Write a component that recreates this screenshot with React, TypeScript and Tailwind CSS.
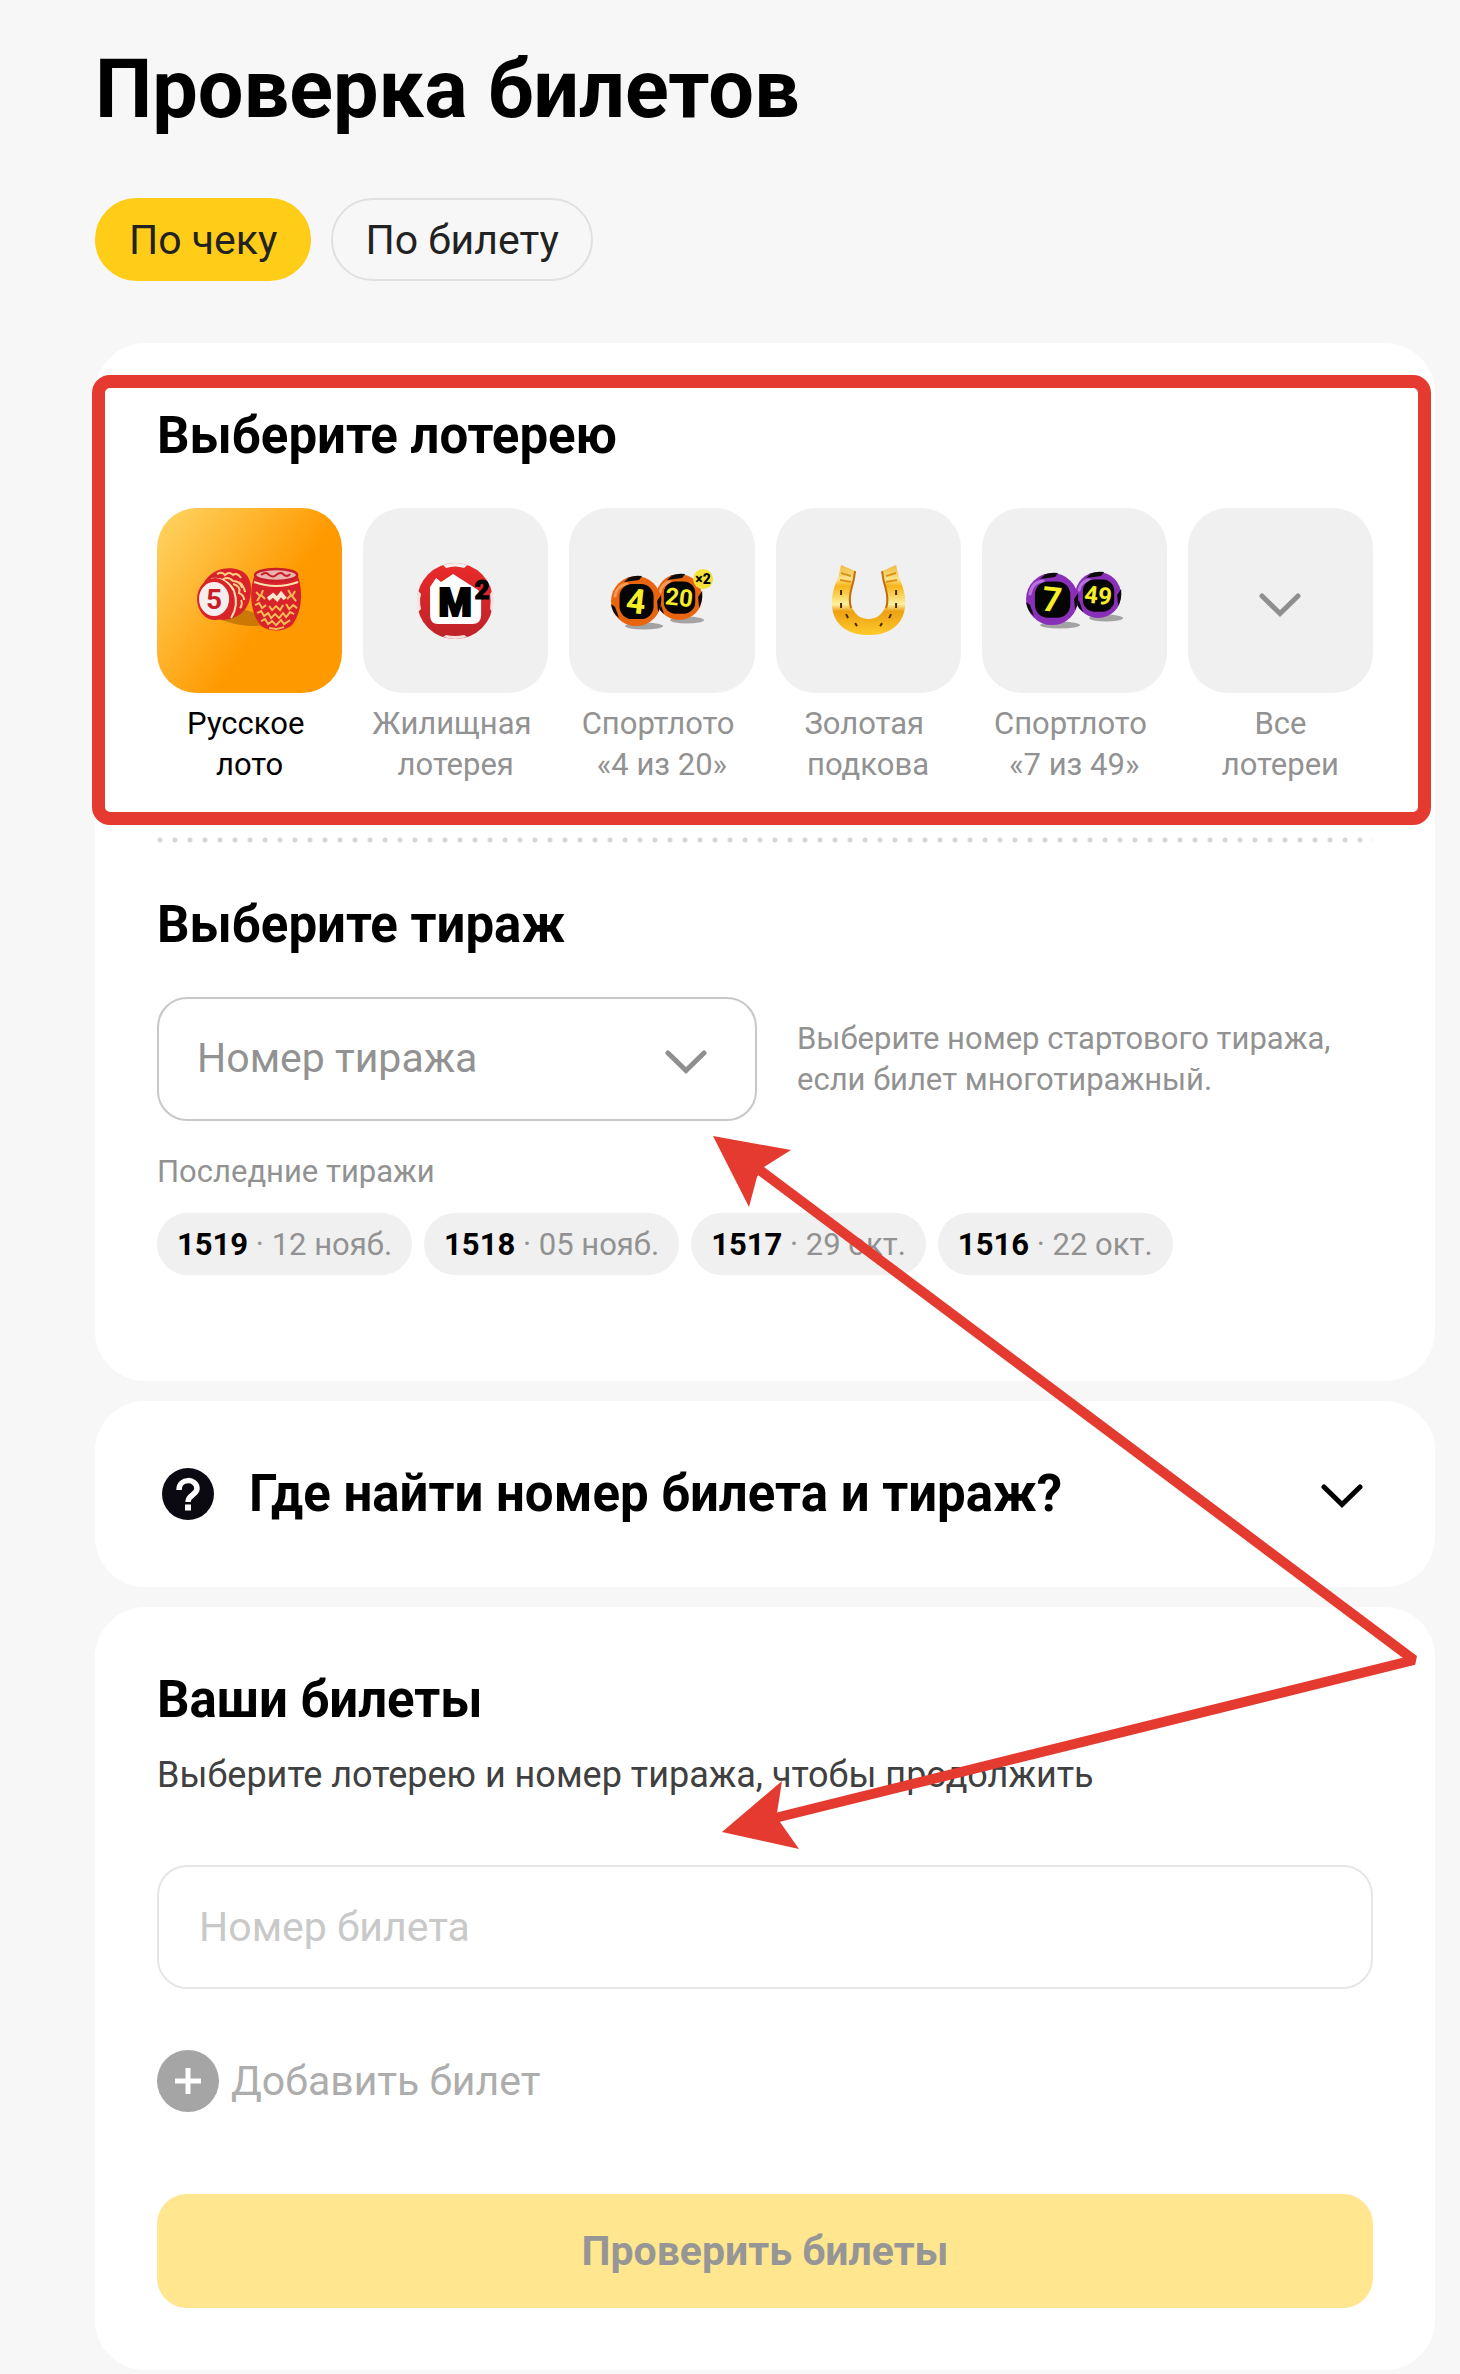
import { useState, type ReactNode } from 'react';

const Chevron = ({ className = '' }: { className?: string }) => (
  <svg viewBox="0 0 42 24" className={`w-[42px] h-6 ${className}`} fill="none" aria-hidden="true">
    <path d="M3 3 L21 20.5 L39 3" stroke="currentColor" strokeWidth="5" strokeLinecap="round" />
  </svg>
);

// Wooden barrels with red ornament
const RussianLotoIcon = () => (
  <svg viewBox="0 0 185 185" className="w-full h-full" aria-hidden="true">
    <ellipse cx="80" cy="108" rx="30" ry="8" fill="#a85f00" opacity="0.6" transform="rotate(12 80 108)" />
    <path d="M46 76 C54 60 72 58 82 62 C92 65 96 76 93 90 C90 104 80 111 66 112 L48 108 Z" fill="#d9232b" />
    <path
      d="M60 66 q5 -3 8 1 q4 -4 8 0 q4 -3 8 3 M66 71 q6 -3 10 2 q7 0 9 7 M76 76 q8 2 6 9 q5 2 5 7 M82 74 q5 4 6 10 M84 92 q2 4 -1 8"
      stroke="#ffcf86"
      strokeWidth="2"
      fill="none"
    />
    <path d="M54 71 q16 -2 23 12 q5 14 -3 27" stroke="#ffe2b0" strokeWidth="2" fill="none" />
    <ellipse cx="58" cy="91" rx="18" ry="21" fill="#d9232b" />
    <ellipse cx="57" cy="91" rx="15" ry="17" fill="#f4eeee" />
    <text x="57" y="101" textAnchor="middle" fontSize="28" fontWeight="700" fill="#c81e2a">5</text>
    <path d="M98 66 C92 80 92 104 104 118 Q119 127 134 118 C146 104 146 80 140 66 Z" fill="#d9232b" />
    <ellipse cx="119" cy="67" rx="21" ry="6" fill="#eab3ae" stroke="#c81e2a" strokeWidth="2.5" />
    <path d="M104 67 q5 -4 8 0 q4 3 7 0 q5 -4 8 0 q4 2 6 -1" stroke="#c81e2a" strokeWidth="2" fill="none" />
    <path d="M97 74 Q119 82 141 74" stroke="#ffe2b0" strokeWidth="2" fill="none" />
    <path
      d="M99 84 l4 4 -3 5 M106 82 l-2 5 4 4 M131 82 l3 5 -4 4 M138 83 l-3 5 4 5 M98 97 l4 -2 3 5 4 -3 M112 98 l3 4 4 -4 4 4 3 -5 M129 96 l3 5 4 -4 4 3 M100 105 l4 -2 3 5 4 -3 3 5 4 -4 4 4 4 -5 3 4 4 -5 4 2 M104 113 l4 -2 3 5 4 -3 4 4 5 -5 3 4 6 -4 M112 120 l7 1 8 -2"
      stroke="#f6bc55"
      strokeWidth="2"
      fill="none"
    />
    <path d="M111 91 l5 -4 4 4 4 -5 4 5" stroke="#ffe7cf" strokeWidth="4" fill="none" />
  </svg>
);

const HousingIcon = () => (
  <svg viewBox="0 0 185 185" className="w-full h-full" aria-hidden="true">
    <defs>
      <linearGradient id="housing" x1="0" y1="0" x2="0" y2="1">
        <stop offset="0" stopColor="#ea2a2a" />
        <stop offset="1" stopColor="#bd2329" />
      </linearGradient>
    </defs>
    <circle cx="92" cy="93" r="38" fill="url(#housing)" />
    {/* white spots on the rim */}
    <path d="M80 57 Q92 53 104 57 L101 60 Q92 57 83 60 Z" fill="#f4f0f0" />
    <path d="M80 129 Q92 133 104 129 L101 127 Q92 129 83 127 Z" fill="#f4dede" />
    <path d="M55 83 Q52 93 55 104 L58 101 Q56 93 58 86 Z" fill="#f6e4e4" />
    <path d="M129 83 Q132 93 129 104 L127 101 Q128 93 127 86 Z" fill="#f6e4e4" />
    <path d="M67 79 L73 70 L78 74 L90 66 L115 82 L118 88 V107 Q118 116 109 116 H75 Q67 116 67 107 Z" fill="#fff" />
    <text x="92" y="108" textAnchor="middle" fontSize="38" fontWeight="900" stroke="#000" strokeWidth="2">M</text>
    <text x="119" y="91" textAnchor="middle" fontSize="26" fontWeight="900" stroke="#000" strokeWidth="1">2</text>
  </svg>
);

type BallProps = { cx: number; cy: number; r: number; color: string; light: string; label: string; size: number };

const Ball = ({ cx, cy, r, color, light, label, size }: BallProps) => (
  <g>
    <ellipse cx={cx + 8} cy={cy + r} rx={r - 6} ry="3.5" fill="#a3a3a3" />
    <circle cx={cx} cy={cy} r={r} fill={color} />
    {/* dark spots on the rim */}
    <path d={`M${cx - 12} ${cy - r + 6} Q${cx - 6} ${cy - r - 2} ${cx + 6} ${cy - r} L${cx + 3} ${cy - r + 4} Z`} fill="#0a0a0a" />
    <path d={`M${cx - r} ${cy + 3} L${cx - r + 4} ${cy + 6} L${cx - r + 8} ${cy + 17} Q${cx - r + 1} ${cy + 12} ${cx - r} ${cy + 3} Z`} fill="#0a0a0a" />
    <path d={`M${cx + r} ${cy - 6} L${cx + r - 4} ${cy} L${cx + r - 3} ${cy + 11} Q${cx + r + 1} ${cy + 4} ${cx + r} ${cy - 6} Z`} fill="#0a0a0a" />
    <path
      d={`M${cx - r + 4} ${cy - 5} Q${cx - r + 6} ${cy - r + 9} ${cx - 9} ${cy - r + 8}`}
      fill="none"
      stroke={light}
      strokeWidth="3"
      strokeLinecap="round"
    />
    <rect x={cx - r * 0.66} y={cy - r * 0.68} width={r * 1.36} height={r * 1.4} rx={r * 0.5} fill="#050505" />
    <text
      x={cx}
      y={cy + size * 0.36}
      textAnchor="middle"
      fontSize={size}
      fontWeight="700"
      fill="#f7ee2a"
      transform={`rotate(6 ${cx} ${cy})`}
    >
      {label}
    </text>
  </g>
);

const Sport420Icon = () => (
  <svg viewBox="0 0 185 185" className="w-full h-full" aria-hidden="true">
    <Ball cx={110} cy={89} r={23} color="#e8640f" light="#f79a55" label="20" size={24} />
    <Ball cx={67} cy={93} r={25} color="#e8640f" light="#f79a55" label="4" size={34} />
    <circle cx="134" cy="71" r="10" fill="#f4e23a" />
    <text x="134" y="76" textAnchor="middle" fontSize="14" fontWeight="900">×2</text>
  </svg>
);

const Sport749Icon = () => (
  <svg viewBox="0 0 185 185" className="w-full h-full" aria-hidden="true">
    <Ball cx={116} cy={87} r={23} color="#8a2fb8" light="#b673dc" label="49" size={24} />
    <Ball cx={70} cy={91} r={26} color="#8a2fb8" light="#b673dc" label="7" size={34} />
  </svg>
);

const HorseshoeIcon = () => (
  <svg viewBox="0 0 185 185" className="w-full h-full" aria-hidden="true">
    <defs>
      <linearGradient id="gold" x1="0" y1="0" x2="0" y2="1">
        <stop offset="0" stopColor="#f0b93c" />
        <stop offset="0.2" stopColor="#fbe28a" />
        <stop offset="0.3" stopColor="#f6b417" />
        <stop offset="0.56" stopColor="#fdf0a0" />
        <stop offset="0.66" stopColor="#eda012" />
        <stop offset="1" stopColor="#ffcb2b" />
      </linearGradient>
    </defs>
    <path
      d="M65 57 L79 63 Q78 72 76 78 C71 96 78 111 92.5 111 C107 111 114 96 109 78 Q107 72 106 63 L120 57 L123 70 C136 96 130 127 92.5 127 C55 127 49 96 62 70 Z"
      fill="url(#gold)"
    />
    <path d="M79 63 Q78 72 76 78 Q72 92 75 100 M106 63 Q107 72 109 78 Q113 92 110 100" stroke="#c56c0b" strokeWidth="2" fill="none" />
    <path d="M65 65 l10 3 M64 72 l11 2 M120 65 l-10 3 M121 72 l-11 2" stroke="#dd9416" strokeWidth="2" />
    <path d="M65 82 v5 M65 95 v5 M70 106 l2 4 M79 115 l2 3 M120 82 v5 M120 95 v5 M115 106 l-2 4 M106 115 l-2 3" stroke="#4a2c00" strokeWidth="2" />
  </svg>
);

const lotteries: { id: string; lines: [string, string]; icon: ReactNode }[] = [
  { id: 'ruslotto', lines: ['Русское\u00a0', 'лото'], icon: <RussianLotoIcon /> },
  { id: 'gzhl', lines: ['Жилищная\u00a0', 'лотерея'], icon: <HousingIcon /> },
  { id: '4x20', lines: ['Спортлото\u00a0', '«4 из 20»'], icon: <Sport420Icon /> },
  { id: 'zp', lines: ['Золотая\u00a0', 'подкова'], icon: <HorseshoeIcon /> },
  { id: '7x49', lines: ['Спортлото\u00a0', '«7 из 49»'], icon: <Sport749Icon /> },
  { id: 'all', lines: ['Все', 'лотереи'], icon: <Chevron className="text-[#8f8f8f] mt-2" /> },
];

const draws = [
  { number: '1519', date: '12 нояб.' },
  { number: '1518', date: '05 нояб.' },
  { number: '1517', date: '29 окт.' },
  { number: '1516', date: '22 окт.' },
];

// Pointers from one corner to both number fields
const Arrows = () => (
  <svg
    viewBox="0 0 708 720"
    className="absolute left-[713px] top-[1134px] w-[708px] h-[720px] pointer-events-none"
    fill="none"
    aria-hidden="true"
  >
    <path d="M44 34 L701 526 L62 684" stroke="#e43a2f" strokeWidth="10" strokeLinejoin="bevel" />
    <path d="M0 2 L78 16 L51 33 L44 43 L36 73 Z" fill="#e43a2f" />
    <path d="M9 698 L69 647 L64 679 L67 688 L86 715 Z" fill="#e43a2f" />
  </svg>
);

export default function App() {
  const [mode, setMode] = useState('receipt');
  const [lottery, setLottery] = useState('ruslotto');
  const [draw, setDraw] = useState('');

  return (
    <div className="relative min-h-screen bg-[#f7f7f7] pt-10 pb-1 pl-[95px] pr-[25px] font-['Roboto',sans-serif] text-black">
      <h1 className="text-[81px] leading-[100px] font-bold">Проверка билетов</h1>

      <div className="flex gap-5 mt-[58px]">
        <button
          onClick={() => setMode('receipt')}
          className={`h-[83px] px-8 rounded-full border-2 text-[41px] leading-[50px] text-[#222] ${
            mode === 'receipt' ? 'bg-[#ffcd18] border-[#ffcd18]' : 'border-[#e0e0e0]'
          }`}
        >
          По чеку
        </button>
        <button
          onClick={() => setMode('ticket')}
          className={`h-[83px] px-8 rounded-full border-2 text-[41px] leading-[50px] text-[#222] ${
            mode === 'ticket' ? 'bg-[#ffcd18] border-[#ffcd18]' : 'border-[#e0e0e0]'
          }`}
        >
          По билету
        </button>
      </div>

      <main className="flex flex-col gap-5 mt-[62px]">
        <section className="relative bg-white rounded-[50px] px-[62px] pt-[63px] pb-[106px]">
          <div className="absolute -left-[3px] right-1 top-8 h-[450px] rounded-[18px] border-[13px] border-[#e43a2f] pointer-events-none" />

          <h2 className="text-[51px] leading-[60px] font-bold">Выберите лотерею</h2>
          <div className="grid grid-cols-6 gap-[21px] mt-[42px]">
            {lotteries.map((item) => (
              <button key={item.id} onClick={() => setLottery(item.id)} className="flex flex-col items-center">
                <span
                  className={`flex items-center justify-center w-full aspect-square rounded-[40px] ${
                    lottery === item.id
                      ? 'bg-[linear-gradient(125deg,#ffd666_0%,#ff9900_60%)]'
                      : 'bg-[#f0f0f0]'
                  }`}
                >
                  {item.icon}
                </span>
                <span
                  className={`mt-[10px] text-[31px] leading-[41px] text-center whitespace-nowrap ${
                    lottery === item.id ? 'text-black' : 'text-[#929292]'
                  }`}
                >
                  {item.lines[0]}
                  <br />
                  {item.lines[1]}
                </span>
              </button>
            ))}
          </div>

          <div className="mt-[52px] h-[6px] bg-[radial-gradient(circle_at_3px_3px,#d6d6d6_2px,transparent_3px)] bg-[length:15px_6px] bg-repeat-round" />

          <h2 className="mt-[52px] text-[51px] leading-[60px] font-bold">Выберите тираж</h2>
          <div className="flex items-center gap-10 mt-[42px]">
            <div className="relative w-[600px] shrink-0">
              <select
                value={draw}
                onChange={(e) => setDraw(e.target.value)}
                aria-label="Номер тиража"
                className="block appearance-none w-full h-[124px] pl-[38px] pr-28 rounded-[30px] border-2 border-[#c8c8c8] bg-white text-[41px] text-[#929292]"
              >
                <option value="">Номер тиража</option>
                {draws.map((d) => (
                  <option key={d.number} value={d.number}>{d.number}</option>
                ))}
              </select>
              <Chevron className="absolute right-[50px] top-[53px] text-[#8f8f8f] pointer-events-none" />
            </div>
            <p className="text-[31px] leading-[41px] text-[#929292]">
              Выберите номер стартового тиража,
              <br />
              если билет многотиражный.
            </p>
          </div>

          <p className="mt-[30px] text-[31px] leading-[41px] text-[#929292]">Последние тиражи</p>
          <div className="flex flex-wrap gap-3 mt-[21px]">
            {draws.map((d) => (
              <button
                key={d.number}
                onClick={() => setDraw(d.number)}
                className="h-[62px] px-5 rounded-full bg-[#f0f0f0] text-[31px] leading-[41px] text-[#929292]"
              >
                <span className="font-bold text-black">{d.number}</span> · {d.date}
              </button>
            ))}
          </div>
        </section>

        <section className="bg-white rounded-[50px]">
          <button className="flex items-center w-full px-[62px] py-[62px] text-left">
            <span className="flex items-center justify-center w-[62px] shrink-0">
              <svg viewBox="0 0 52 52" className="w-[52px] h-[52px]" fill="none" aria-hidden="true">
                <circle cx="26" cy="26" r="26" fill="#0b0a12" />
                <path
                  d="M17 22 C17 9.5 35 10 35 20.5 C35 27 26 26.5 26 34"
                  stroke="#fff"
                  strokeWidth="5.5"
                />
                <rect x="23" y="36.5" width="6" height="6" fill="#fff" />
              </svg>
            </span>
            <span className="grow ml-[30px] text-[51px] leading-[62px] font-bold">Где найти номер билета и тираж?</span>
            <span className="flex items-center justify-center w-[62px] shrink-0">
              <Chevron className="mt-1" />
            </span>
          </button>
        </section>

        <section className="bg-white rounded-[50px] px-[62px] pt-[63px] pb-[62px]">
          <h2 className="text-[51px] leading-[60px] font-bold">Ваши билеты</h2>
          <p className="mt-[22px] text-[36px] leading-[46px] text-[#404040]">
            Выберите лотерею и номер тиража, чтобы продолжить
          </p>
          <input
            type="text"
            placeholder="Номер билета"
            aria-label="Номер билета"
            className="block w-full h-[124px] mt-[67px] px-10 rounded-[30px] border-2 border-[#e6e6e6] text-[41px] placeholder:text-[#c9c9c9]"
          />
          <button className="flex items-center gap-3 h-[62px] mt-[61px] text-[41px] leading-[50px] text-[#adadad]">
            <svg viewBox="0 0 62 62" className="w-[62px] h-[62px]" aria-hidden="true">
              <circle cx="31" cy="31" r="31" fill="#a5a5a5" />
              <path d="M31 18 V44 M18 31 H44" stroke="#fff" strokeWidth="5" />
            </svg>
            Добавить билет
          </button>
          <button
            disabled
            className="block w-full h-[114px] mt-[82px] rounded-[30px] bg-[#ffe68f] text-[41px] leading-[50px] font-bold text-[#969696]"
          >
            Проверить билеты
          </button>
        </section>
      </main>

      <Arrows />
    </div>
  );
}
